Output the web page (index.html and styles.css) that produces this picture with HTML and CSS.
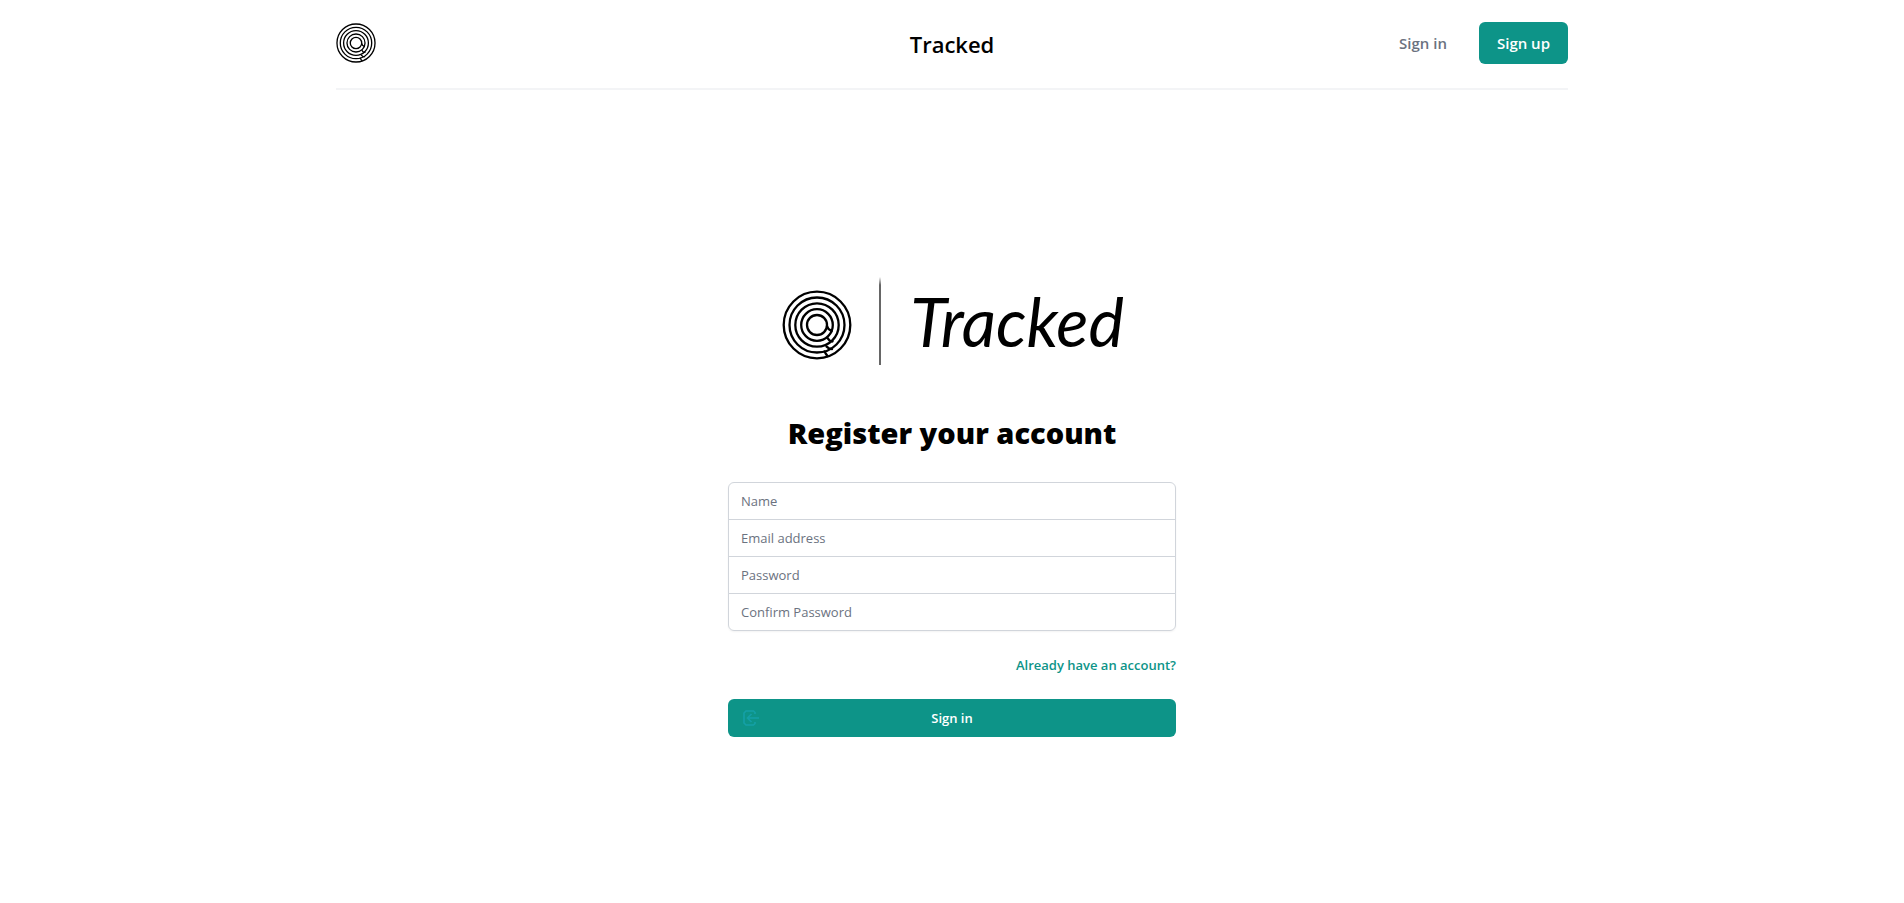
FILE: index.html
```html
<!DOCTYPE html>
<html lang="en">
<head>
<meta charset="utf-8">
<meta name="viewport" content="width=device-width, initial-scale=1">
<title>Tracked</title>
<link rel="stylesheet" href="styles.css">
</head>
<body>
<svg class="defs" aria-hidden="true">
  <symbol id="rings" viewBox="0 0 70 70">
    <g fill="none" stroke="#000" stroke-width="2.3" stroke-linecap="round">
      <circle cx="35" cy="35" r="33.3"/>
      <circle cx="35" cy="35" r="27.5"/>
      <circle cx="35" cy="35" r="21.7"/>
      <circle cx="35" cy="35" r="15.8"/>
      <circle cx="35" cy="35" r="10"/>
      <path d="M45 36l1.5 3 3 2M45.500 48l2 2.500 3 1M44.500 56.500l2.500 2 3 .5M42.500 61.500l1.500 2.500 1.500 2"/>
    </g>
  </symbol>
</svg>
<header class="header">
  <nav class="bar">
    <a class="home" href="#" aria-label="Home"><svg class="mark"><use href="#rings"/></svg></a>
    <a class="title" href="#">Tracked</a>
    <div class="actions">
      <a class="signin" href="#">Sign in</a>
      <a class="signup" href="#">Sign up</a>
    </div>
  </nav>
</header>
<main class="main">
  <div class="panel">
    <div class="brand">
      <svg class="brand-mark" aria-hidden="true"><use href="#rings"/></svg>
      <svg class="brand-line" viewBox="0 0 2 88" aria-hidden="true"><path d="M1 0L2 8V88H0V8Z" fill="#666"/></svg>
      <span class="brand-name">Tracked</span>
    </div>
    <h1 class="heading">Register your account</h1>
    <form class="form">
      <div class="fields">
        <input class="field" type="text" placeholder="Name" aria-label="Name">
        <input class="field" type="email" placeholder="Email address" aria-label="Email address">
        <input class="field" type="password" placeholder="Password" aria-label="Password">
        <input class="field" type="password" placeholder="Confirm Password" aria-label="Confirm Password">
      </div>
      <a class="account-link" href="#">Already have an account?</a>
      <button class="submit" type="submit">
        <svg class="submit-icon" viewBox="0 0 16 16" fill="none" stroke="#14a0a6" stroke-width="1.700" aria-hidden="true"><path d="M12 4V2.500L10.500 1H3L1 3V13L3 15H10.500L12 13.500V12M16 8H5M8.500 4L4.500 8L8.500 12"/></svg>
        Sign in
      </button>
    </form>
  </div>
</main>
</body>
</html>
```
FILE: styles.css
```css
* { box-sizing: border-box; }
body {
  margin: 0;
  min-height: 100vh;
  display: flex;
  flex-direction: column;
  background: #fff;
  color: #000;
  font-family: "Segoe UI", "Open Sans", "Noto Sans", sans-serif;
}
a { color: inherit; text-decoration: none; }
.defs { position: absolute; width: 0; height: 0; }
.header { width: 100%; max-width: 1280px; margin: 0 auto; padding: 0 24px; }
.bar {
  display: grid;
  grid-template-columns: 1fr auto 1fr;
  align-items: center;
  padding: 22px 0 24px;
  border-bottom: 2px solid #f3f4f6;
}
.home { display: flex; }
.mark { width: 40px; height: 40px; }
.title { padding-top: 2px; font-size: 22px; line-height: 32px; font-weight: 600; }
.actions { display: flex; justify-content: flex-end; align-items: center; gap: 32px; }
.signin { color: #6b7280; font-size: 15px; line-height: 24px; font-weight: 600; }
.signup {
  padding: 9px 18px;
  border-radius: 6px;
  background: #0d9488;
  color: #fff;
  font-size: 15px;
  line-height: 24px;
  font-weight: 600;
}
.main { flex: 1; display: flex; justify-content: center; padding: 187px 16px 48px; }
.panel { width: 100%; max-width: 448px; }
.brand { display: flex; align-items: center; justify-content: center; height: 88px; padding-left: 2px; }
.brand-mark { width: 70px; height: 70px; margin-top: 8px; }
.brand-line { width: 2px; height: 88px; margin: 0 29px 0 27px; }
.brand-name { font-family: Lato, sans-serif; font-size: 67px; line-height: 88px; font-style: italic; }
.heading { margin: 50px 0 0; font-size: 29px; line-height: 36px; font-weight: 800; text-align: center; }
.form { display: flex; flex-direction: column; margin-top: 31px; }
.fields { display: flex; flex-direction: column; border-radius: 6px; box-shadow: 0 1px 2px rgba(0, 0, 0, 0.05); }
.field {
  width: 100%;
  height: 38px;
  padding: 8px 12px;
  border: 1px solid #d1d5db;
  border-radius: 0;
  background: #fff;
  font-family: inherit;
  font-size: 13px;
  line-height: 20px;
}
.field + .field { margin-top: -1px; }
.field:first-child { border-radius: 6px 6px 0 0; }
.field:last-child { border-radius: 0 0 6px 6px; }
.field::placeholder { color: #6b7280; opacity: 1; }
.account-link { align-self: flex-end; margin: 24px 0; color: #0d9488; font-size: 13px; line-height: 20px; font-weight: 600; }
.submit {
  position: relative;
  height: 38px;
  border: 0;
  border-radius: 6px;
  background: #0d9488;
  color: #fff;
  font-family: inherit;
  font-size: 13px;
  line-height: 20px;
  font-weight: 600;
}
.submit-icon { position: absolute; left: 15px; top: 11px; width: 16px; height: 16px; }
```
